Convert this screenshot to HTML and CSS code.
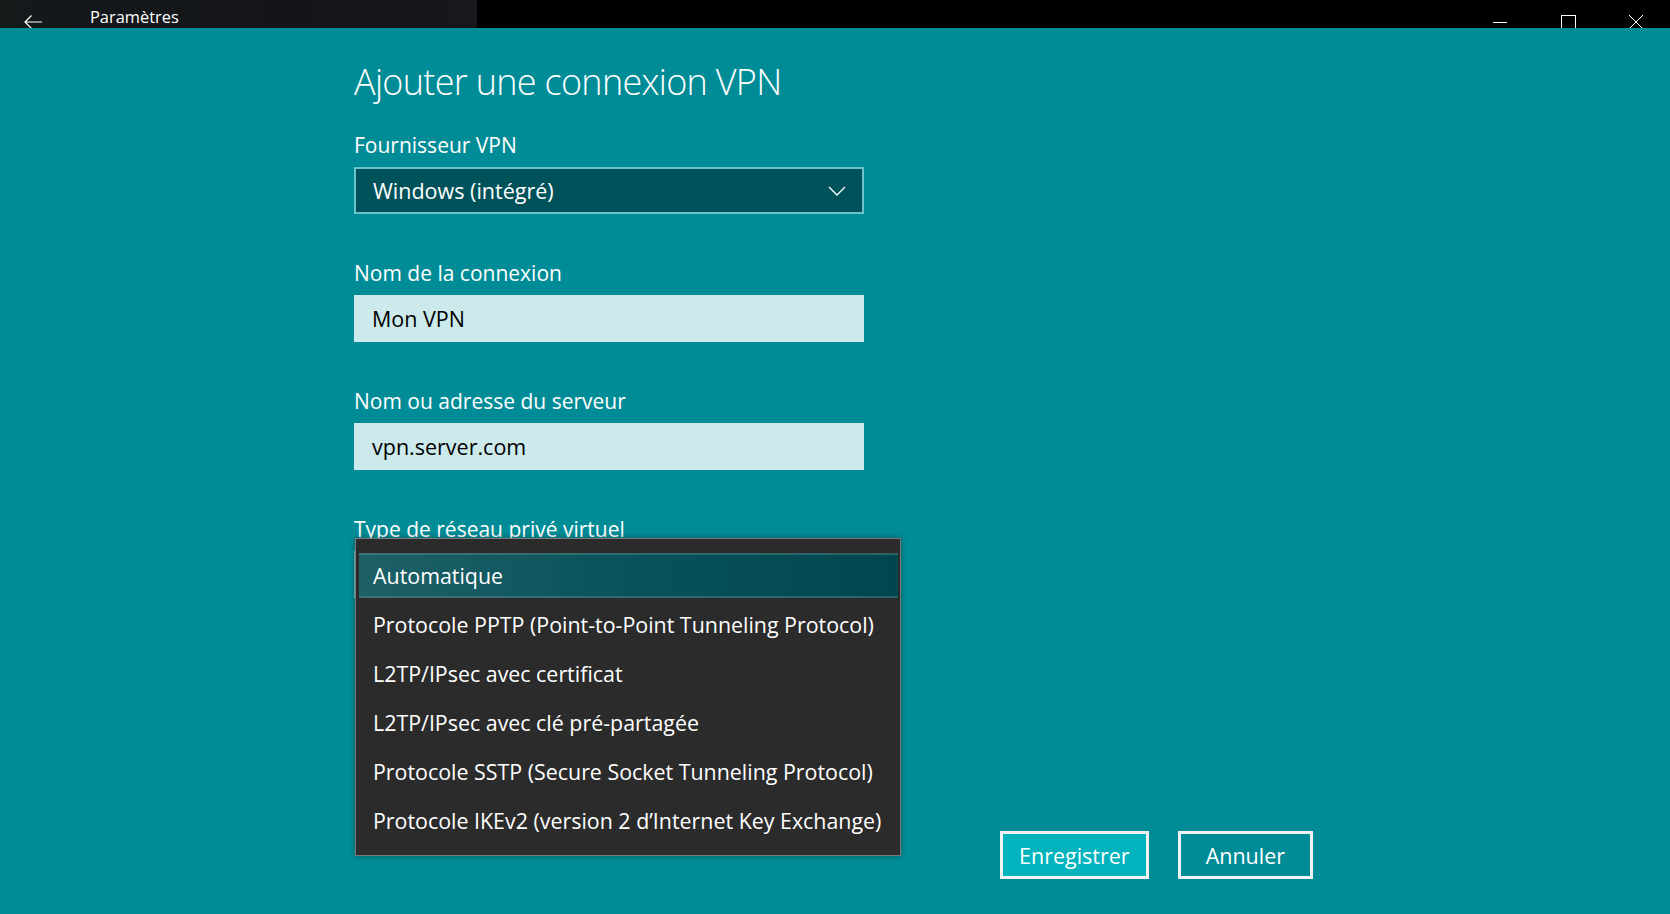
FILE: index.html
```html
<!DOCTYPE html>
<html lang="fr">
<head>
    <meta charset="UTF-8">
    <meta name="viewport" content="width=device-width, initial-scale=1.0">
    <title>Paramètres</title>
    <link rel="stylesheet" href="styles.css">
</head>
<body>
    <header class="titlebar">
        <div class="titlebar-left">
            <span class="back">
                <svg width="20" height="16" viewBox="0 0 20 16"><path d="M19 8H2M8.5 1.5L2 8l6.5 6.5" fill="none" stroke="#fff" stroke-width="1.2"/></svg>
            </span>
            <span class="app-name">Paramètres</span>
        </div>
        <div class="controls">
            <span class="ctl">
                <svg width="16" height="16" viewBox="0 0 16 16"><path d="M1 8.5h14" stroke="#fff" stroke-width="1"/></svg>
            </span>
            <span class="ctl">
                <svg width="16" height="16" viewBox="0 0 16 16"><rect x="1.5" y="1.5" width="14" height="14" fill="none" stroke="#fff" stroke-width="1"/></svg>
            </span>
            <span class="ctl">
                <svg width="16" height="16" viewBox="0 0 16 16"><path d="M1 1l14 14M15 1L1 15" stroke="#fff" stroke-width="1"/></svg>
            </span>
        </div>
    </header>

    <main class="page">
        <h1>Ajouter une connexion VPN</h1>

        <div class="field">
            <label>Fournisseur VPN</label>
            <div class="combo">
                <span>Windows (intégré)</span>
                <svg width="18" height="10" viewBox="0 0 18 10"><path d="M1 1l8 8 8-8" fill="none" stroke="#fff" stroke-width="1.3"/></svg>
            </div>
        </div>

        <div class="field">
            <label>Nom de la connexion</label>
            <div class="textbox">Mon VPN</div>
        </div>

        <div class="field">
            <label>Nom ou adresse du serveur</label>
            <div class="textbox">vpn.server.com</div>
        </div>

        <div class="field field-type">
            <label>Type de réseau privé virtuel</label>
            <div class="combo"></div>

            <ul class="menu">
                <li class="selected">Automatique</li>
                <li>Protocole PPTP (Point-to-Point Tunneling Protocol)</li>
                <li>L2TP/IPsec avec certificat</li>
                <li>L2TP/IPsec avec clé pré-partagée</li>
                <li>Protocole SSTP (Secure Socket Tunneling Protocol)</li>
                <li>Protocole IKEv2 (version 2 d’Internet Key Exchange)</li>
            </ul>
        </div>

        <div class="actions">
            <button class="btn btn-primary">Enregistrer</button>
            <button class="btn">Annuler</button>
        </div>
    </main>
</body>
</html>
```

FILE: styles.css
```css
html, body {
    margin: 0;
    height: 100%;
}

body {
    font-family: "Open Sans", "Noto Sans", sans-serif;
    background-color: #008c96;
    color: white;
    overflow: hidden;
}

/* barre de titre */
.titlebar {
    height: 28px;
    display: flex;
    justify-content: space-between;
    background-color: #000;
    overflow: hidden;
}

.titlebar-left {
    width: 477px;
    display: flex;
    align-items: flex-start;
    background: linear-gradient(90deg, #14191a, #141519 60%, #17171c);
}

.back {
    width: 43px;
    padding: 13px 0 0 23px;
    box-sizing: border-box;
}

.app-name {
    margin-left: 47px;
    margin-top: 6px;
    font-size: 16.4px;
    line-height: 22px;
}

.controls {
    display: flex;
}

.ctl {
    width: 68px;
    display: flex;
    justify-content: center;
    padding-top: 14px;
}

/* contenu */
.page {
    padding-left: 354px;
    position: relative;
}

h1 {
    margin: 0;
    padding-top: 28px;
    height: 75px;
    font-size: 36px;
    font-weight: 300;
    letter-spacing: -0.7px;
    line-height: 52px;
}

.field {
    width: 510px;
    margin-bottom: 45px;
}

.field label {
    display: block;
    font-size: 21px;
    line-height: 28px;
    margin-bottom: 8px;
}

.combo, .textbox {
    height: 47px;
    box-sizing: border-box;
    font-size: 21.5px;
    display: flex;
    align-items: center;
    padding: 0 16px 0 17px;
}

.combo {
    border: 2px solid #6cc3c9;
    background-color: #00525a;
    justify-content: space-between;
}

.textbox {
    background-color: #cce9eb;
    color: #000;
    padding-left: 18px;
}

.field-type {
    position: relative;
}

/* liste déroulante ouverte */
.menu {
    position: absolute;
    top: 23px;
    left: 1px;
    width: 544px;
    margin: 0;
    padding: 12px 0 10px;
    list-style: none;
    background-color: #2b2b2b;
    border: 1px solid #7a7a7a;
    box-shadow: 0 0 6px rgba(0,0,0,0.35);
}

.menu li {
    height: 49px;
    line-height: 49px;
    padding-left: 17px;
    font-size: 21.4px;
    white-space: nowrap;
}

.menu li.selected {
    margin: 2px 2px 2px 3px;
    height: 45px;
    line-height: 45px;
    padding-left: 14px;
    background: linear-gradient(90deg, #1f6067 0%, #0b545c 45%, #00464f 100%);
    box-shadow: inset 0 2px 0 rgba(120,150,150,0.35), inset 0 -2px 0 rgba(120,150,150,0.35);
}

/* boutons */
.actions {
    display: flex;
    gap: 29px;
    padding-left: 646px;
    margin-top: 233px;
}

.btn {
    height: 48px;
    border: 3px solid #f2f2f2;
    background-color: transparent;
    color: white;
    font-family: inherit;
    font-size: 21.5px;
    padding: 0 25px;
}

.btn-primary {
    background-color: #00b3bd;
    padding: 0 16px;
}
```
